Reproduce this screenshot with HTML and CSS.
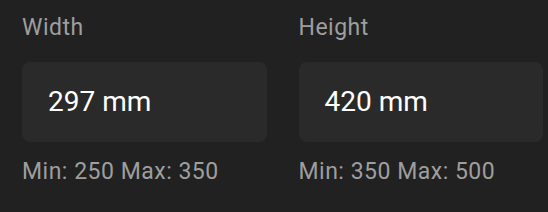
FILE: index.html
```html
<!DOCTYPE html>
<html lang="en">
<head>
  <meta charset="UTF-8" />
  <meta name="viewport" content="width=device-width, initial-scale=1.0"/>
  <title>Paper size</title>
  <link rel="stylesheet" href="styles.css">
</head>
<body>
  <div class="size-fields">
    <!-- Width -->
    <div class="field">
      <label class="field-label" for="width">Width</label>
      <div class="field-box" id="width">297 mm</div>
      <div class="field-hint">Min: 250 Max: 350</div>
    </div>

    <!-- Height -->
    <div class="field">
      <label class="field-label" for="height">Height</label>
      <div class="field-box" id="height">420 mm</div>
      <div class="field-hint">Min: 350 Max: 500</div>
    </div>
  </div>
</body>
</html>
```

FILE: styles.css
```css
body {
  margin: 0;
  font-family: 'Roboto', 'Liberation Sans', sans-serif;
  background-color: #212121;
  color: #fff;
  height: 100vh;
}

.size-fields {
  display: grid;
  grid-template-columns: 1fr 1fr;
  column-gap: 32px;
  width: 521px;
  padding: 14px 0 0 22px;
}

.field {
  display: flex;
  flex-direction: column;
}

.field-label {
  font-size: 23px;
  line-height: 28px;
  letter-spacing: 0.5px;
  color: #9e9e9e;
}

.field-box {
  margin-top: 20px;
  height: 80px;
  padding-left: 26px;
  display: flex;
  align-items: center;
  background-color: #2a2a2a;
  border-radius: 8px;
  font-size: 28px;
  line-height: 34px;
  color: #fff;
}

.field-hint {
  margin-top: 16px;
  font-size: 23px;
  line-height: 28px;
  letter-spacing: 0.5px;
  color: #9e9e9e;
}
```
